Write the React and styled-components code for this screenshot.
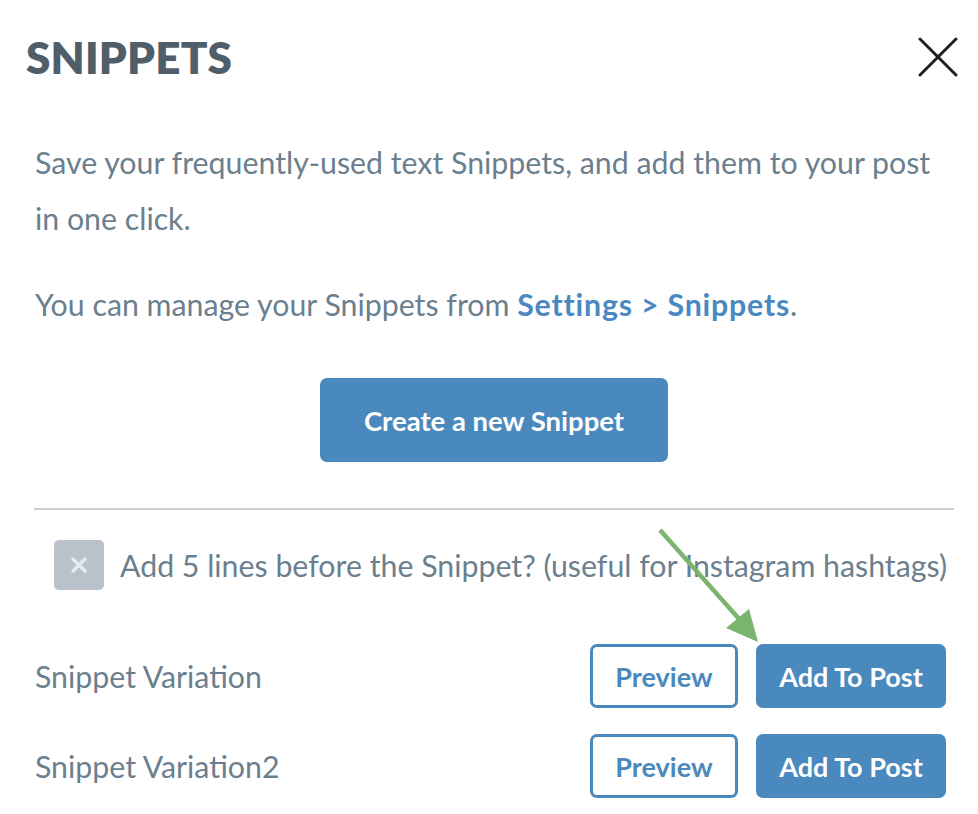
import styled, { createGlobalStyle } from "styled-components";

const GlobalStyle = createGlobalStyle`
  html, body {
    margin: 0;
    padding: 0;
    background: #ffffff;
  }
  body {
    font-family: "Lato", "Noto Sans", sans-serif;
  }
`;

const snippets = [{ name: "Snippet Variation" }, { name: "Snippet Variation2" }];

export default function App() {
  return (
    <>
      <GlobalStyle />
      <Panel>
        <Header>
          <Title>SNIPPETS</Title>
          <CloseButton aria-label="Close">
            <svg width="40" height="40" viewBox="0 0 40 40">
              <path d="M2 2 L38 38 M38 2 L2 38" stroke="#1f1f1f" strokeWidth="3" strokeLinecap="round" />
            </svg>
          </CloseButton>
        </Header>

        <Body>
          <Text>
            Save your frequently-used text Snippets, and add them to your post in one click.
          </Text>
          <Text $top={30}>
            You can manage your Snippets from <Link>Settings &gt; Snippets</Link>.
          </Text>

          <Center>
            <CreateButton>Create a new Snippet</CreateButton>
          </Center>

          <Divider />

          <CheckRow>
            <CheckBox>
              <svg width="18" height="18" viewBox="0 0 18 18">
                <path d="M3 3 L15 15 M15 3 L3 15" stroke="#e6eaee" strokeWidth="3.5" strokeLinecap="round" />
              </svg>
            </CheckBox>
            <CheckLabel>Add 5 lines before the Snippet? (useful for Instagram hashtags)</CheckLabel>
          </CheckRow>

          <List>
            {snippets.map((s) => (
              <SnippetRow key={s.name}>
                <SnippetName>{s.name}</SnippetName>
                <Actions>
                  <ActionButton $outline>Preview</ActionButton>
                  <ActionButton>Add To Post</ActionButton>
                </Actions>
              </SnippetRow>
            ))}
          </List>
        </Body>

        <Arrow width="120" height="130" viewBox="0 0 120 130">
          <line x1="4" y1="2" x2="84" y2="92" stroke="#7ab46e" strokeWidth="4.5" />
          <polygon points="102,114 70,100 93,81" fill="#7ab46e" />
        </Arrow>
      </Panel>
    </>
  );
}

const Panel = styled.div`
  position: relative;
  width: 978px;
  min-height: 814px;
  box-sizing: border-box;
`;

const Header = styled.div`
  display: flex;
  justify-content: space-between;
  align-items: center;
  padding: 34px 20px 0 26px;
`;

const Title = styled.h1`
  margin: 0;
  font-family: "Lato", sans-serif;
  font-weight: 800;
  font-size: 44px;
  line-height: 46px;
  letter-spacing: 0.2px;
  color: #4f5e69;
`;

const CloseButton = styled.button`
  display: flex;
  padding: 0;
  border: none;
  background: none;
  cursor: pointer;
`;

const Body = styled.div`
  padding: 54px 24px 0 35px;
`;

const Text = styled.p`
  margin: ${(p) => p.$top || 0}px 0 0;
  font-size: 30.3px;
  line-height: 56px;
  color: #6b7f8e;
`;

const Link = styled.a`
  font-weight: 700;
  letter-spacing: 0.8px;
  color: #4a89bf;
  text-decoration: none;
`;

const Center = styled.div`
  display: flex;
  justify-content: center;
  margin-top: 46px;
  padding-right: 1px;
`;

const CreateButton = styled.button`
  width: 348px;
  height: 84px;
  border: none;
  border-radius: 7px;
  background: #4a89bd;
  color: #ffffff;
  font-family: "Lato", sans-serif;
  font-weight: 700;
  font-size: 27.5px;
  cursor: pointer;
`;

const Divider = styled.hr`
  margin: 46px 0 0 -1px;
  border: none;
  border-top: 2px solid #cfcfcf;
`;

const CheckRow = styled.div`
  display: flex;
  align-items: center;
  gap: 16px;
  margin-top: 30px;
  padding-left: 19px;
`;

const CheckBox = styled.span`
  display: flex;
  align-items: center;
  justify-content: center;
  flex: none;
  width: 50px;
  height: 50px;
  border-radius: 5px;
  background: #b9c2ca;
`;

const CheckLabel = styled.span`
  font-size: 30.3px;
  color: #6b7f8e;
  white-space: nowrap;
`;

const List = styled.div`
  display: flex;
  flex-direction: column;
  gap: 26px;
  margin-top: 54px;
  padding-right: 8px;
`;

const SnippetRow = styled.div`
  display: flex;
  align-items: center;
  justify-content: space-between;
`;

const SnippetName = styled.span`
  font-size: 30.3px;
  color: #6b7f8e;
`;

const Actions = styled.div`
  display: flex;
  gap: 18px;
`;

const ActionButton = styled.button`
  box-sizing: border-box;
  height: 64px;
  width: ${(p) => (p.$outline ? 148 : 190)}px;
  border: 3px solid #4a89bd;
  border-radius: 7px;
  background: ${(p) => (p.$outline ? "#ffffff" : "#4a89bd")};
  color: ${(p) => (p.$outline ? "#4a89bd" : "#ffffff")};
  font-family: "Lato", sans-serif;
  font-weight: 700;
  font-size: 27px;
  cursor: pointer;
`;

const Arrow = styled.svg`
  position: absolute;
  left: 656px;
  top: 528px;
  pointer-events: none;
`;
